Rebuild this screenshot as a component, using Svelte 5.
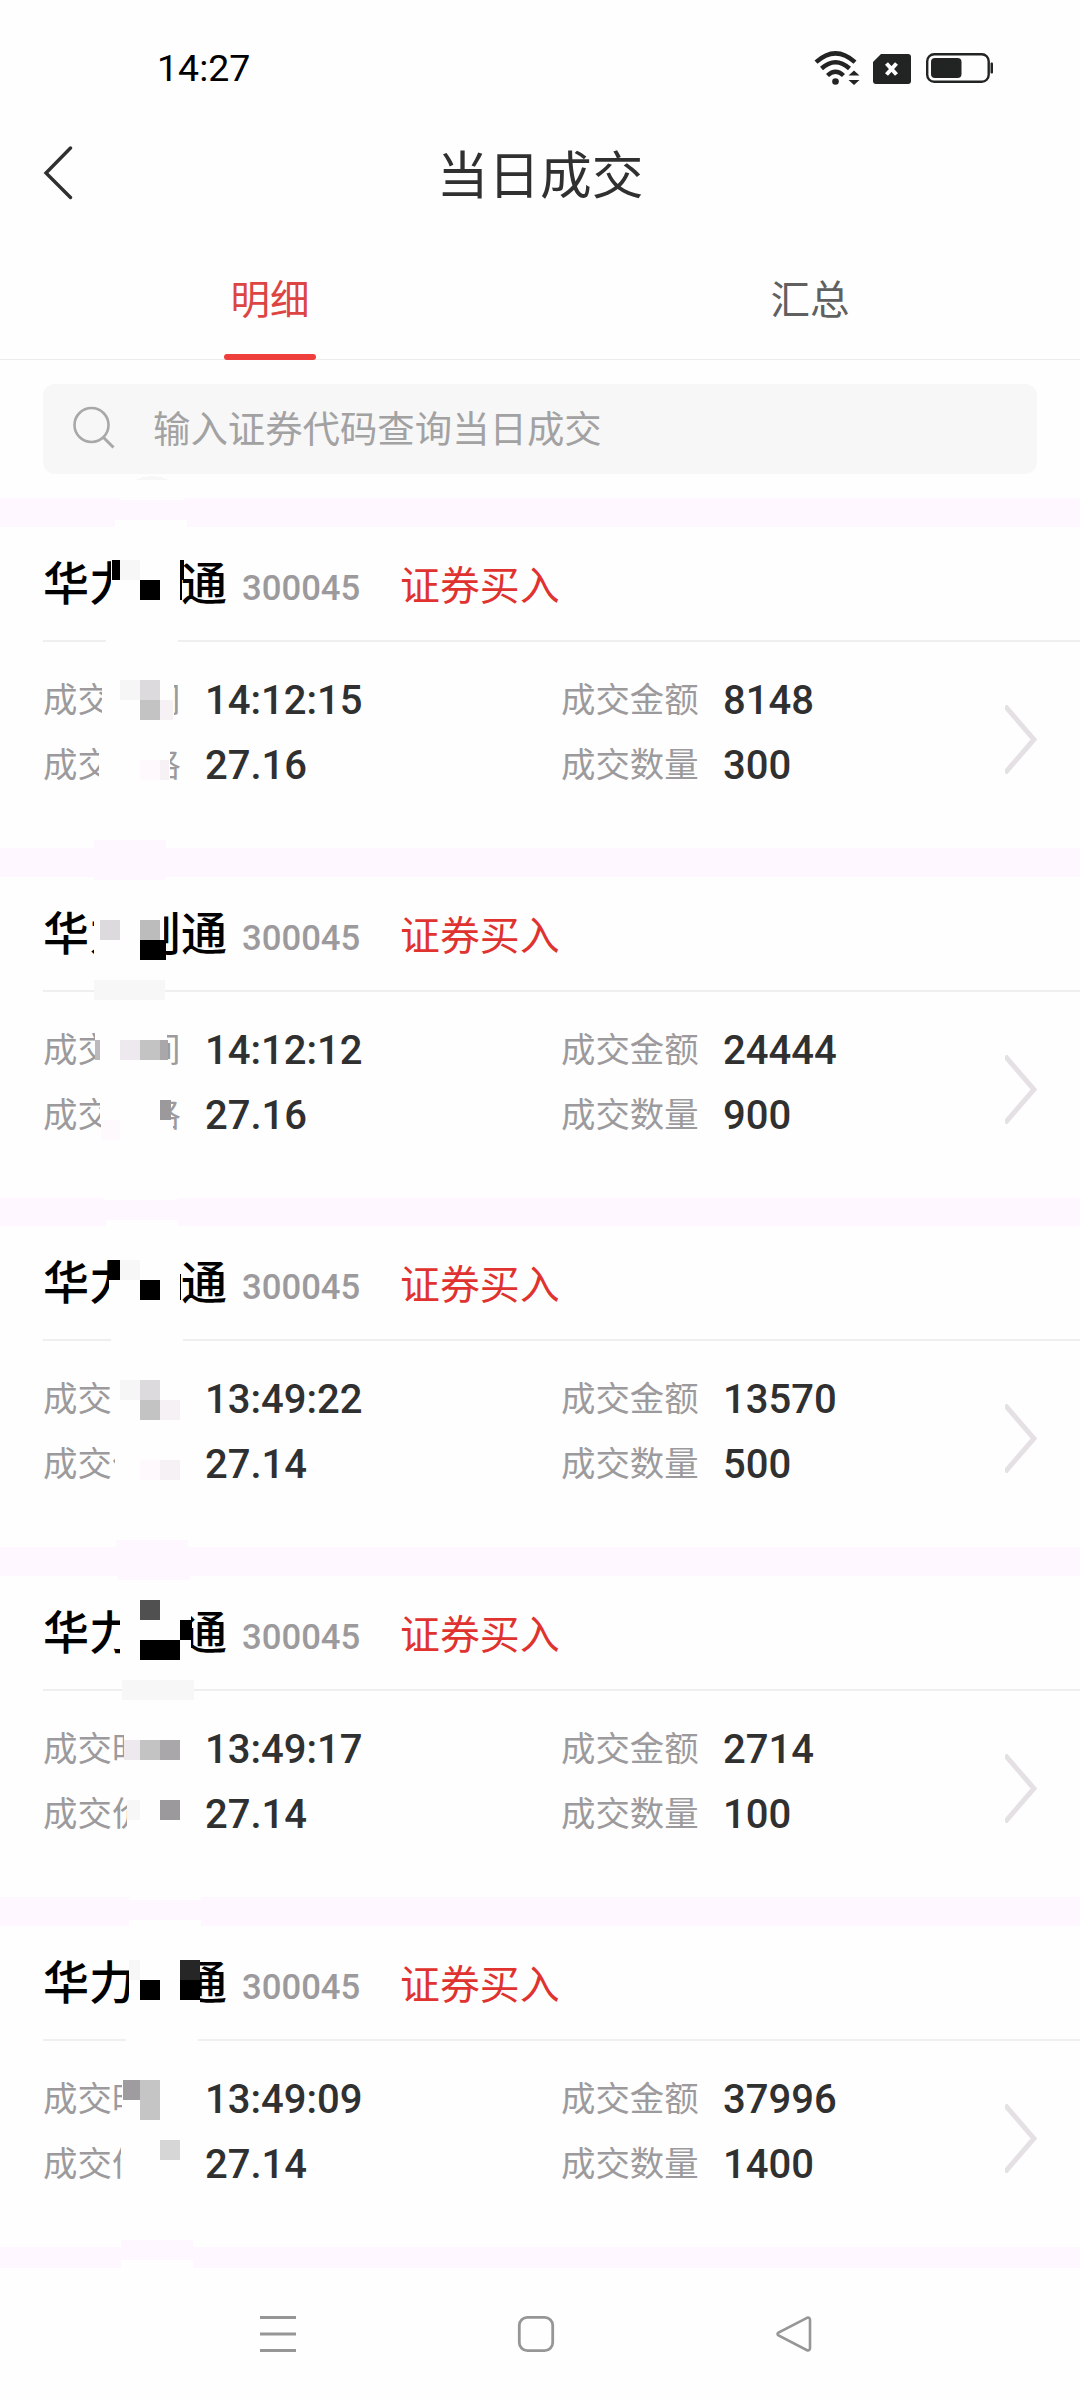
<script>
  // Today's trades, newest first
  const trades = [
    { name: '华力创通', code: '300045', time: '14:12:15', price: '27.16', amount: '8148', quantity: '300' },
    { name: '华力创通', code: '300045', time: '14:12:12', price: '27.16', amount: '24444', quantity: '900' },
    { name: '华力创通', code: '300045', time: '13:49:22', price: '27.14', amount: '13570', quantity: '500' },
    { name: '华力创通', code: '300045', time: '13:49:17', price: '27.14', amount: '2714', quantity: '100' },
    { name: '华力创通', code: '300045', time: '13:49:09', price: '27.14', amount: '37996', quantity: '1400' }
  ];

  const bg = '#fefefe';
  const band = '#fef7ff';

  // Privacy mosaic over the names and labels: x, y, width, height, colour
  const mosaic = [
    [119, 498, 66, 2, bg],
    [115, 520, 72, 7, bg],
    [111, 555, 69, 45, bg],
    [109, 600, 71, 20, bg],
    [112, 560, 8, 20, '#000'],
    [120, 560, 20, 20, '#f7f7f7'],
    [140, 580, 20, 20, '#000'],
    [180, 560, 4, 20, '#000'],
    [180, 580, 2, 20, '#000'],
    [106, 636, 72, 10, bg],
    [102, 675, 72, 50, bg],
    [120, 680, 20, 20, '#f7f6f7'],
    [140, 680, 20, 20, '#dddadd'],
    [140, 700, 20, 20, '#c3c3c3'],
    [160, 700, 13, 20, '#f5f1f5'],
    [99, 740, 71, 40, bg],
    [99, 780, 82, 14, bg],
    [140, 760, 20, 20, '#fdf9fd'],
    [160, 760, 9, 20, '#f5f1f5'],
    [94, 840, 72, 8, band],
    [94, 876, 71, 4, band],

    [94, 905, 70, 60, bg],
    [100, 920, 20, 20, '#dddadd'],
    [140, 920, 20, 20, '#bcbcbc'],
    [140, 940, 26, 20, '#000'],
    [94, 980, 71, 20, '#f7f7f7'],
    [95, 1030, 72, 50, bg],
    [95, 1040, 5, 20, '#bbb9bb'],
    [120, 1040, 20, 20, '#eee9ee'],
    [140, 1040, 20, 20, '#c3c3c3'],
    [160, 1040, 8, 20, '#a9a7a9'],
    [100, 1092, 71, 28, bg],
    [101, 1120, 72, 20, bg],
    [160, 1100, 11, 20, '#9c999c'],
    [101, 1120, 19, 20, '#fdf9fd'],
    [104, 1197, 73, 3, bg],
    [106, 1220, 72, 7, bg],

    [108, 1255, 72, 25, bg],
    [109, 1280, 71, 30, bg],
    [108, 1260, 12, 20, '#000'],
    [120, 1260, 20, 20, '#f7f7f7'],
    [140, 1280, 20, 20, '#000'],
    [180, 1274, 1, 26, '#000'],
    [111, 1336, 72, 10, bg],
    [111, 1375, 72, 50, bg],
    [120, 1380, 20, 20, '#f7f6f7'],
    [140, 1380, 20, 20, '#dddadd'],
    [140, 1400, 20, 20, '#c3c3c3'],
    [160, 1400, 20, 20, '#f5f1f5'],
    [115, 1440, 68, 50, bg],
    [140, 1460, 20, 20, '#fdf9fd'],
    [160, 1460, 20, 20, '#f5f1f5'],
    [116, 1540, 72, 8, band],
    [118, 1576, 72, 4, band],

    [120, 1600, 71, 60, bg],
    [140, 1600, 20, 20, '#505050'],
    [180, 1620, 12, 20, '#000'],
    [140, 1640, 40, 20, '#000'],
    [122, 1680, 72, 20, '#f7f7f7'],
    [124, 1725, 59, 50, bg],
    [124, 1740, 16, 20, '#eee9ee'],
    [140, 1740, 20, 20, '#c3c3c3'],
    [160, 1740, 20, 20, '#a9a7a9'],
    [127, 1790, 56, 50, bg],
    [127, 1800, 13, 20, '#f7f7f7'],
    [160, 1800, 20, 20, '#9c999c'],
    [129, 1897, 72, 3, bg],
    [129, 1920, 72, 7, bg],

    [129, 1955, 71, 55, bg],
    [129, 1960, 11, 20, '#f7f7f7'],
    [140, 1980, 20, 20, '#000'],
    [180, 1960, 20, 20, '#262626'],
    [180, 1980, 20, 20, '#000'],
    [126, 2036, 72, 10, bg],
    [122, 2075, 61, 50, bg],
    [123, 2080, 17, 20, '#9e9c9e'],
    [140, 2080, 20, 40, '#c5c5c5'],
    [121, 2140, 62, 48, bg],
    [160, 2140, 20, 20, '#d6d6d6'],
    [121, 2240, 72, 8, band],
    [121, 2260, 72, 8, bg]
  ];

  let activeTab = 'detail';
</script>

<div class="screen">
  <div class="status-bar">
    <span class="clock">14:27</span>
    <svg class="status-icons" width="180" height="36" viewBox="0 0 180 36">
      <!-- Wifi -->
      <g fill="none" stroke="#212422" stroke-width="4.4">
        <path d="M2 12.2Q21.500 -5.500 41 12.200" />
        <path d="M7.500 18.500Q21.500 6 35.500 18.500" />
        <path d="M13.500 25.500Q21.500 18 29.500 25.500" />
      </g>
      <circle cx="21.500" cy="31.500" r="3.300" fill="#212422" />
      <path d="M34.500 25.500L40 20.500L45.500 25.500ZM34.500 30L40 35L45.500 30Z" fill="#212422" />
      <!-- No SIM -->
      <path d="M67 4H94Q97 4 97 7V31Q97 34 94 34H62Q59 34 59 31V12Z" fill="#212422" />
      <path d="M72.500 13.500L82.500 24.500M82.500 13.500L72.500 24.500" stroke="#fff" stroke-width="4" />
      <!-- Battery -->
      <rect x="113.200" y="4.200" width="61.500" height="27.600" rx="7" fill="none" stroke="#212422" stroke-width="2.400" />
      <rect x="117" y="8" width="30.500" height="20" rx="4" fill="#212422" />
      <rect x="176.500" y="12.500" width="2.500" height="11" rx="1" fill="#212422" />
    </svg>
  </div>

  <header>
    <button class="back" aria-label="返回">
      <svg width="32" height="54" viewBox="0 0 32 54">
        <path d="M28.500 2L4 27L28.500 51.500" fill="none" stroke="#303030" stroke-width="3.400" stroke-linecap="round" />
      </svg>
    </button>
    <h1>当日成交</h1>
  </header>

  <nav class="tabs">
    <button class:active={activeTab === 'detail'} on:click={() => (activeTab = 'detail')}>明细</button>
    <button class:active={activeTab === 'summary'} on:click={() => (activeTab = 'summary')}>汇总</button>
  </nav>

  <div class="search">
    <svg width="44" height="44" viewBox="0 0 44 44">
      <circle cx="19.500" cy="20" r="17" fill="none" stroke="#a9a8a9" stroke-width="2.600" />
      <path d="M31.500 32.500L41.500 42.500" stroke="#a9a8a9" stroke-width="3" />
    </svg>
    <span>输入证券代码查询当日成交</span>
  </div>

  <main>
    {#each trades as trade}
      <section class="trade">
        <div class="heading">
          <span class="name">{trade.name}</span>
          <span class="code">{trade.code}</span>
          <span class="side">证券买入</span>
        </div>
        <div class="details">
          <dl>
            <dt>成交时间</dt>
            <dd>{trade.time}</dd>
            <dt>成交金额</dt>
            <dd>{trade.amount}</dd>
            <dt>成交价格</dt>
            <dd>{trade.price}</dd>
            <dt>成交数量</dt>
            <dd>{trade.quantity}</dd>
          </dl>
          <svg class="arrow" width="32" height="69" viewBox="0 0 32 69">
            <path d="M0 1L29 34.500L0 68" fill="none" stroke="#e4e0e4" stroke-width="5" />
          </svg>
        </div>
      </section>
    {/each}
  </main>

  <footer>
    <svg width="38" height="38" viewBox="0 0 38 38">
      <path d="M1 2.500H37M1 19H37M1 35.500H37" stroke="#969696" stroke-width="3" />
    </svg>
    <svg width="38" height="38" viewBox="0 0 38 38">
      <rect x="2.300" y="2.300" width="33.400" height="33.400" rx="8" fill="none" stroke="#969696" stroke-width="2.800" />
    </svg>
    <svg width="38" height="38" viewBox="0 0 38 38">
      <path d="M32 2.800L3.500 17.500Q1.500 19 3.500 20.500L32 35.200Q35 36 35 33V5Q35 2 32 2.800Z" fill="none" stroke="#969696" stroke-width="2.600" />
    </svg>
  </footer>

  <svg class="mosaic" width="1080" height="2400" viewBox="0 0 1080 2400" shape-rendering="crispEdges">
    <path d="M136 480Q152 472 168 480Z" fill="#f7f7f7" />
    {#each mosaic as [x, y, width, height, fill]}
      <rect {x} {y} {width} {height} {fill} />
    {/each}
  </svg>
</div>

<style>
  :global(body) {
    margin: 0;
    background: #fefefe;
  }

  .screen {
    position: relative;
    display: flex;
    flex-direction: column;
    width: 1080px;
    height: 2400px;
    overflow: hidden;
    background: #fefefe;
    font-family: Roboto, "Noto Sans CJK SC", sans-serif;
  }

  button {
    padding: 0;
    border: none;
    background: none;
    font-family: inherit;
  }

  .status-bar {
    display: flex;
    justify-content: space-between;
    align-items: center;
    height: 136px;
    padding: 0 86px 0 157px;
    box-sizing: border-box;
  }

  .clock {
    font-size: 37.500px;
    color: #000;
  }

  header {
    display: grid;
    grid-template-columns: 120px 1fr 120px;
    align-items: center;
    height: 78px;
  }

  .back {
    display: flex;
    padding-left: 42px;
    padding-bottom: 4px;
  }

  h1 {
    margin: 0;
    padding-top: 3px;
    font-size: 51.700px;
    line-height: 75px;
    font-weight: 400;
    text-align: center;
    color: #303030;
  }

  .tabs {
    display: flex;
    height: 145px;
    border-bottom: 1px solid #ececec;
  }

  .tabs button {
    position: relative;
    flex: 1;
    padding-top: 20px;
    font-size: 39.500px;
    color: #606060;
  }

  .tabs .active {
    color: #dc4542;
  }

  .tabs .active::after {
    content: "";
    position: absolute;
    left: 224px;
    bottom: -1px;
    width: 92px;
    height: 6px;
    border-radius: 3px;
    background: #ee3f3c;
  }

  .search {
    display: flex;
    align-items: center;
    gap: 37px;
    height: 90px;
    margin: 24px 43px;
    padding: 0 0 5px 29px;
    box-sizing: border-box;
    border-radius: 12px;
    background: #f7f7f7;
    font-size: 37.400px;
    color: #a3a2a3;
  }

  main {
    height: 1770px;
    overflow: hidden;
    background: #fef7ff;
  }

  .trade {
    height: 321px;
    margin-top: 28.750px;
    background: #fefefe;
  }

  .heading {
    display: flex;
    align-items: baseline;
    height: 115px;
    margin-left: 43px;
    border-bottom: 2px solid #efefef;
    box-sizing: border-box;
    line-height: 114px;
    white-space: nowrap;
  }

  .name {
    width: 199px;
    font-size: 46px;
    font-weight: 500;
    color: #000;
  }

  .code {
    width: 158px;
    font-size: 34.700px;
    line-height: 112px;
    font-weight: 500;
    color: #9c9a9c;
  }

  .side {
    font-size: 39.900px;
    color: #e0322f;
  }

  .details {
    display: flex;
    justify-content: space-between;
    align-items: flex-start;
    padding: 26px 43px 0;
  }

  dl {
    display: grid;
    grid-template-columns: 162px 356px 162px auto;
    grid-auto-rows: 65px;
    align-items: start;
    margin: 0;
    line-height: 65px;
  }

  dt {
    font-size: 34.400px;
    color: #9c9a9c;
  }

  dd {
    margin: 0;
    font-size: 40px;
    font-weight: 500;
    color: #303030;
  }

  .arrow {
    margin-top: 37px;
  }

  footer {
    display: flex;
    flex: 1;
    justify-content: space-between;
    align-items: center;
    padding: 0 267px 0 259px;
  }

  .mosaic {
    position: absolute;
    top: 0;
    left: 0;
    pointer-events: none;
  }
</style>
